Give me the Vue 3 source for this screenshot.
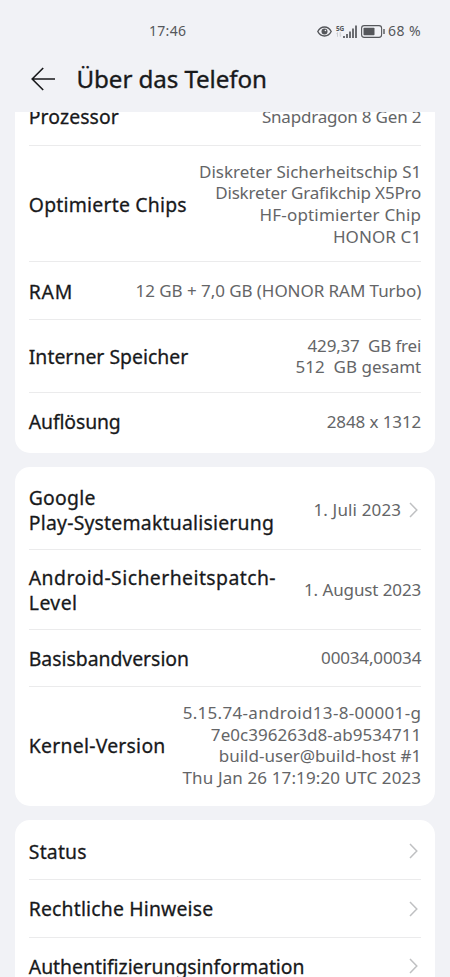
<script setup>
const groups = [
  [
    { label: ['Prozessor', 0.1], values: [['Snapdragon 8 Gen 2', -0.2]] },
    {
      label: ['Optimierte Chips', 0.22],
      values: [
        ['Diskreter Sicherheitschip S1', 0],
        ['Diskreter Grafikchip X5Pro', -0.16],
        ['HF-optimierter Chip', 0.18],
        ['HONOR C1', 0.1],
      ],
    },
    { label: ['RAM', 0.7], values: [['12 GB + 7,0 GB (HONOR RAM Turbo)', -0.06]] },
    {
      label: ['Interner Speicher', 0.02],
      values: [['429,37  GB frei', -0.18], ['512  GB gesamt', 0]],
    },
    { label: ['Auflösung', -0.12], values: [['2848 x 1312', -0.1]] },
  ],
  [
    { label: ['Google\nPlay-Systemaktualisierung', 0.22], values: [['1. Juli 2023', 0.15]], link: true },
    { label: ['Android-Sicherheitspatch-\nLevel', 0.44], values: [['1. August 2023', -0.1]] },
    { label: ['Basisbandversion', -0.02], values: [['00034,00034', -0.15]] },
    {
      label: ['Kernel-Version', 0.25],
      values: [
        ['5.15.74-android13-8-00001-g', 0.31],
        ['7e0c396263d8-ab9534711', 0.05],
        ['build-user@build-host #1', 0.02],
        ['Thu Jan 26 17:19:20 UTC 2023', 0.12],
      ],
    },
  ],
  [
    { label: ['Status', 0.2], values: [], link: true },
    { label: ['Rechtliche Hinweise', 0.17], values: [], link: true },
    { label: ['Authentifizierungsinformation', -0.02], values: [], link: true },
  ],
]
const tracking = (v) => ({ letterSpacing: v + 'px' })
</script>

<template>
  <div class="screen">
    <div class="status">
      <span class="time">17:46</span>
      <div class="indicators">
        <svg class="eye" viewBox="0 0 15 11">
          <path d="M.8 5.5C2.4 2.4 4.8 1 7.500 1s5.100 1.400 6.700 4.500C12.600 8.600 10.200 10 7.500 10S2.400 8.600.8 5.500z" fill="none" stroke="#55575b" stroke-width="1.400" />
          <circle cx="7.500" cy="5.500" r="3" fill="#55575b" />
          <circle cx="8.400" cy="4.500" r=".8" fill="#f1f2f6" />
        </svg>
        <div class="network">
          <span class="gen">5G</span>
          <svg class="updown" viewBox="0 0 6 5">
            <path d="M1.500 4.800V.6M.4 1.700L1.500.6M4.200.2v4.200M5.300 3.300L4.200 4.400" fill="none" stroke="#c3c5c9" stroke-width=".8" />
          </svg>
        </div>
        <svg class="signal" viewBox="0 0 14 13">
          <path d="M1 11v2M4 9v4M7 6.500V13M10 3.500V13M13 .5V13" stroke="#55575b" stroke-width="1.700" />
        </svg>
        <svg class="battery" viewBox="0 0 24 13">
          <rect x=".6" y=".6" width="20" height="11.800" rx="2.600" fill="none" stroke="#55575b" stroke-width="1.100" />
          <rect x="2.500" y="2.700" width="11" height="7.600" rx=".8" fill="#55575b" />
          <path d="M23 4v5" stroke="#55575b" stroke-width="1.400" />
        </svg>
        <span class="percent">68 %</span>
      </div>
    </div>

    <header class="header">
      <svg class="back" viewBox="0 0 24 24">
        <path d="M12.200 1L1.200 12l11 11M1.200 12H24" fill="none" stroke="#18191b" stroke-width="1.600" />
      </svg>
      <h1>Über das Telefon</h1>
    </header>

    <main class="list">
      <section v-for="(rows, g) in groups" :key="g" class="card">
        <div v-for="row in rows" :key="row.label[0]" class="row">
          <div class="label" :style="tracking(row.label[1])">{{ row.label[0] }}</div>
          <div class="value">
            <div v-for="line in row.values" :key="line[0]" :style="tracking(line[1])">{{ line[0] }}</div>
          </div>
          <svg v-if="row.link" class="chevron" viewBox="0 0 9 16">
            <path d="M1 1l6.800 7L1 15" fill="none" stroke="#bfc0c2" stroke-width="1.500" />
          </svg>
        </div>
      </section>
    </main>
  </div>
</template>

<style>
body {
  background: #f1f2f6;
}
</style>

<style scoped>
.screen {
  display: flex;
  flex-direction: column;
  height: 977px;
  overflow: hidden;
  background: #f1f2f6;
  color: #18191b;
  font-family: "Noto Sans", sans-serif;
}
.status {
  display: grid;
  grid-template-columns: 1fr auto;
  align-items: center;
  height: 46px;
  padding: 16px 29px 0 149px;
  box-sizing: border-box;
  color: #55575b;
  font-size: 14px;
  line-height: 30px;
}
.time {
  letter-spacing: 0.3px;
}
.indicators {
  display: flex;
  align-items: center;
}
.eye {
  width: 15px;
  height: 11px;
}
.network {
  display: flex;
  flex-direction: column;
  width: 8px;
  margin-left: 4px;
}
.gen {
  font-size: 6.5px;
  font-weight: 700;
  line-height: 7px;
  letter-spacing: -0.3px;
}
.updown {
  width: 6px;
  height: 5px;
}
.signal {
  width: 14px;
  height: 13px;
  margin-left: -1px;
}
.battery {
  width: 24px;
  height: 13px;
  margin-left: 4px;
}
.percent {
  margin-left: 3px;
  letter-spacing: 0.4px;
}
.header {
  display: flex;
  align-items: center;
  gap: 21.500px;
  height: 66px;
  padding: 0 31px;
}
.back {
  width: 24px;
  height: 24px;
}
h1 {
  margin: 0;
  font-size: 24.2px;
  font-weight: 400;
  line-height: 32px;
  letter-spacing: -0.1px;
  -webkit-text-stroke: 0.35px currentColor;
}
.list {
  display: flex;
  flex: 1;
  flex-direction: column;
  gap: 14.5px;
  min-height: 0;
  padding: 0 14.6px;
  overflow: hidden;
}
.card {
  flex: none;
  padding: 2.2px 14.2px;
  border-radius: 15px;
  background: #fff;
}
.card:first-child {
  margin-top: -26px;
}
.row {
  display: flex;
  align-items: center;
  justify-content: space-between;
  min-height: 57.500px;
  padding: 15px 0 14px;
  box-sizing: border-box;
  border-bottom: 1px solid #ebebec;
}
.row:last-child {
  border-bottom-color: transparent;
}
.label {
  font-size: 19.4px;
  line-height: 25px;
  white-space: pre;
  -webkit-text-stroke: 0.28px currentColor;
}
.value {
  flex: 1;
  color: #646567;
  font-size: 17px;
  line-height: 21.660px;
  text-align: right;
  white-space: pre;
}
.chevron {
  flex: none;
  width: 9px;
  height: 16px;
  margin: 0 3px 0 8px;
}
</style>
